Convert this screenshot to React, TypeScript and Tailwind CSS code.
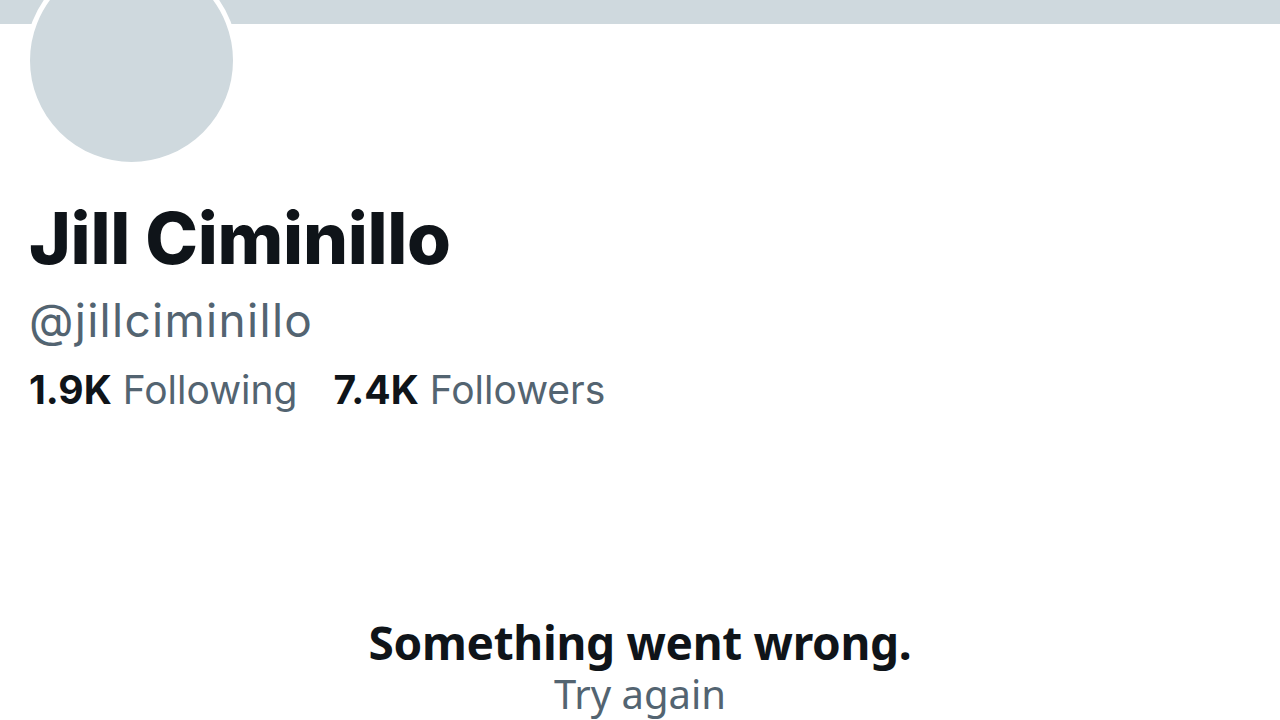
export default function App() {
  return (
    <div className="h-[720px] w-[1280px] overflow-hidden bg-white font-['Inter',sans-serif] text-[#0f1419]">
      {/* Banner */}
      <div className="h-[24px] w-full bg-[#cfd9de]" />

      {/* Avatar */}
      <div className="relative ml-[25px] mt-[-70px] h-[213px] w-[213px] rounded-full border-[5px] border-white bg-[#cfd9de]" />

      {/* Profile info */}
      <div className="px-[29px]">
        <h1 className="mt-[31px] text-[71px] font-extrabold leading-[80px] tracking-[-0.3px]">Jill Ciminillo</h1>
        <p className="mt-[18px] text-[46px] leading-[48px] tracking-[1.3px] text-[#536471]">@jillciminillo</p>
        <div className="mt-[24px] flex items-center gap-[36px] text-[39px] leading-[44px]">
          <span>
            <span className="font-bold">1.9K</span> <span className="text-[#536471]">Following</span>
          </span>
          <span>
            <span className="font-bold">7.4K</span> <span className="text-[#536471]">Followers</span>
          </span>
        </div>
      </div>

      {/* Error state */}
      <div className="mt-[202px] flex flex-col items-center font-['Noto_Sans',sans-serif]">
        <p className="text-[46px] font-bold leading-[56px] tracking-[-0.3px]">Something went wrong.</p>
        <p className="mt-[4px] text-[40px] leading-[40px] text-[#536471]">Try again</p>
      </div>
    </div>
  );
}
